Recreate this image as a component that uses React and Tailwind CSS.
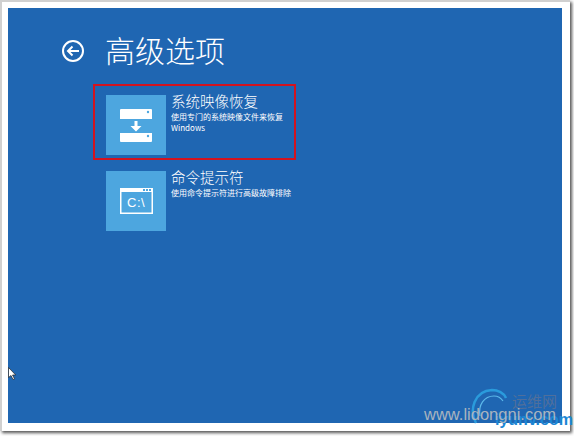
const cjk = "font-['Noto_Sans_CJK_SC','Noto_Sans',sans-serif]";

function Tile({ children }) {
  return <div className="flex h-[60px] w-[60px] shrink-0 items-center justify-center bg-[#4da6df]">{children}</div>;
}

function ImageIcon() {
  return (
    <svg width="32" height="33" viewBox="0 0 32 33">
      <path d="M1 0h30a1 1 0 0 1 1 1v9H0V1a1 1 0 0 1 1-1z" fill="#fff" />
      <circle cx="28" cy="3" r="1.2" fill="#4da6df" />
      <path d="M14.5 12h3v5h4l-5.5 5.5L10.500 17h4z" fill="#fff" />
      <path d="M0 24h32v8a1 1 0 0 1-1 1H1a1 1 0 0 1-1-1z" fill="#fff" />
      <circle cx="28" cy="27" r="1.2" fill="#4da6df" />
    </svg>
  );
}

function CmdIcon() {
  return (
    <svg width="33" height="26" viewBox="0 0 33 26">
      <path d="M0 0h33v26H0z M1.500 4v20.500h30V4z" fill="#fff" fillRule="evenodd" />
      <rect x="23" y="1" width="2" height="2" fill="#4da6df" />
      <rect x="26" y="1" width="2" height="2" fill="#4da6df" />
      <rect x="29" y="1" width="2" height="2" fill="#4da6df" />
      <text x="7" y="19" fill="#fff" fontSize="13" letterSpacing="0.5" fontFamily="Liberation Sans, sans-serif">C:\</text>
    </svg>
  );
}

export default function App() {
  return (
    <div className="relative h-[436px] w-[574px] overflow-hidden bg-white">
      <div className="h-[431px] w-[570px] border-t-2 border-l-2 border-[#d0d0d0] pt-[6px] pl-[6px] shadow-[2px_2px_3px_#555]">
        <div className={`relative h-[415px] w-[554px] bg-[#1f66b2] text-white ${cjk}`}>
          <div className="flex items-center pt-[23px] pl-[53px]">
            <svg width="24" height="24" viewBox="0 0 24 24" fill="none" stroke="#fff" strokeWidth="2">
              <circle cx="12" cy="12" r="10" />
              <path d="M18 12H7M11.500 7.500 7 12l4.500 4.500" />
            </svg>
            <h1 className="mb-[4px] ml-[20px] text-[30px] leading-[36px] font-light">高级选项</h1>
          </div>
          <div className="mt-[13px] ml-[85px] flex w-[203px] flex-col">
            <div className="flex h-[76px] w-[203px] gap-[5px] border-2 border-[#d3131f] pt-[9px] pl-[11px]">
              <Tile><ImageIcon /></Tile>
              <div className="-mt-[2px]">
                <div className="text-[14.5px] leading-[16px] font-light">系统映像恢复</div>
                <div className="mt-[2px] w-[125px] text-[8px] leading-[11px]">使用专门的系统映像文件来恢复 Windows</div>
              </div>
            </div>
            <div className="mt-[11px] flex gap-[5px] pl-[13px]">
              <Tile><CmdIcon /></Tile>
              <div className="-mt-[2px]">
                <div className="text-[14.5px] leading-[16px] font-light">命令提示符</div>
                <div className="mt-[2px] whitespace-nowrap text-[8px] leading-[11px]">使用命令提示符进行高级故障排除</div>
              </div>
            </div>
          </div>
          {/* cursor */}
          <svg className="absolute top-[359px] left-0" width="9" height="13" viewBox="0 0 9 13">
            <path d="M0.500 0.500v10l2.500-2 2 4 1.500-.7-2-3.800h3.200z" fill="#fff" stroke="#222" strokeWidth="0.7" />
          </svg>
        </div>
      </div>
      {/* watermark */}
      <svg className="absolute top-[388px] left-[470px]" width="40" height="38" viewBox="0 0 40 38" fill="none">
        <path d="M6 35C-1 22 4 3 22 2c6 0 12 3 14 8" stroke="#2a9bdc" strokeWidth="2.500" />
        <path d="M10 28C8 17 14 8 24 8c4 0 7 2 9 5" stroke="#5db9ea" strokeWidth="1.200" />
      </svg>
      <div className={`absolute top-[393px] left-[512px] text-[15px] leading-[16px] text-[#4f6f9c] ${cjk}`}>运维网</div>
      <div className="absolute top-[413px] left-[495px] font-['Liberation_Sans',sans-serif] text-[16px] leading-[14px] font-bold text-[#1c86d4]">iyunv.com</div>
      <div className="absolute top-[405px] left-[424px] font-['Liberation_Sans',sans-serif] text-[16.5px] leading-[18px] text-[#a9b4bf]">www.lidongni.com</div>
    </div>
  );
}
